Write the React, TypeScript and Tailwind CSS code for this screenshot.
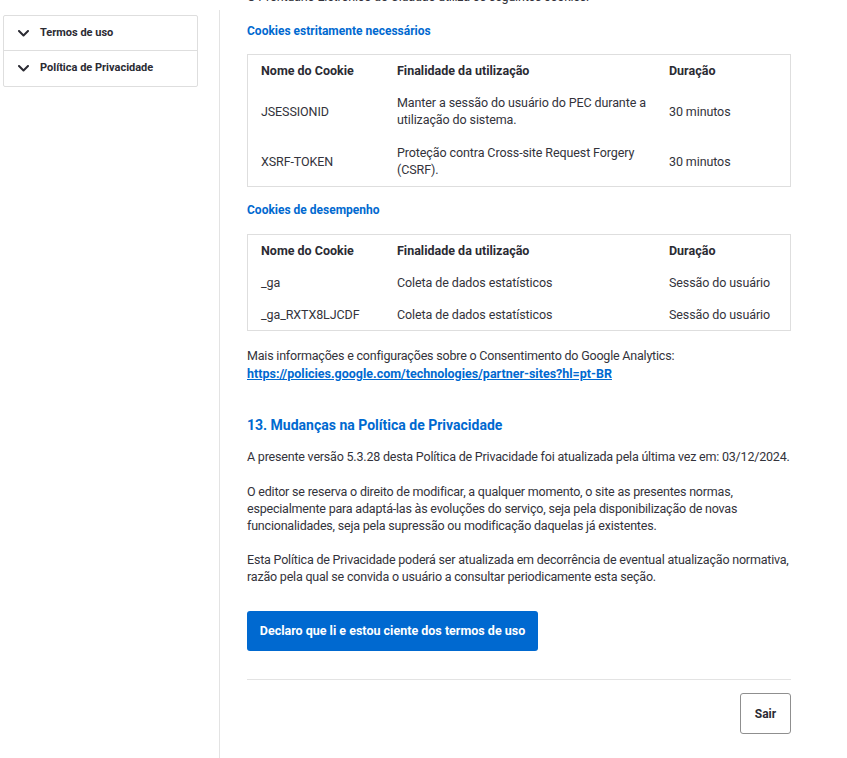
import React from "react";

const font = { fontFamily: "Roboto, 'Noto Sans', sans-serif" };

function Chevron() {
  return (
    <svg width="11" height="7" viewBox="0 0 11 7" className="shrink-0 text-[#2b2b33]">
      <polyline
        points="1,1 5.5,5.5 10,1"
        fill="none"
        stroke="currentColor"
        strokeWidth="2"
        strokeLinecap="round"
        strokeLinejoin="round"
      />
    </svg>
  );
}

function SideItem({ label, last }: { label: string; last?: boolean }) {
  return (
    <div
      className={
        "flex h-[35px] items-center gap-[11px] pl-[14px] " +
        (last ? "" : "border-b border-[#dedede]")
      }
    >
      <Chevron />
      <span className="text-[11px] font-bold text-[#2b2b33]">{label}</span>
    </div>
  );
}

type Row = { name: string; use: string; time: string };

function CookieTable({ rows, tall }: { rows: Row[]; tall?: boolean }) {
  return (
    <div className="border border-[#dedede] px-[13px]">
      <div className="grid h-[31px] grid-cols-[136px_272px_1fr] items-center pt-[1px] text-[12.5px] font-bold text-[#2b2b33]">
        <span>Nome do Cookie</span>
        <span>Finalidade da utilização</span>
        <span>Duração</span>
      </div>
      {rows.map((r) => (
        <div
          key={r.name}
          className={
            "grid grid-cols-[136px_272px_1fr] items-center text-[12.5px] leading-[17px] tracking-[-0.1px] text-[#33333b] " +
            (tall ? "h-[50px]" : "h-[32px]")
          }
        >
          <span>{r.name}</span>
          <span className="pr-[8px]">{r.use}</span>
          <span>{r.time}</span>
        </div>
      ))}
    </div>
  );
}

const body = "text-[12.5px] leading-[17px] tracking-[-0.2px]";

export default function App() {
  return (
    <div className="flex min-h-[758px] bg-white text-[#33333b]" style={font}>
      <aside className="w-[219px] shrink-0 pl-[3px] pr-[21px] pt-[15px]">
        <div className="rounded-[2px] border border-[#dedede]">
          <SideItem label="Termos de uso" />
          <SideItem label="Política de Privacidade" last />
        </div>
      </aside>
      <main className="mt-[10px] w-[600px] border-l border-[#e3e3e3] pl-[27px] pr-[28px]">
        <p className={"-mt-[22px] " + body}>
          O Prontuário Eletrônico do Cidadão utiliza os seguintes cookies:
        </p>
        <h3 className="mt-[18px] text-[12px] font-bold leading-[17px] text-[#0069d0]">
          Cookies estritamente necessários
        </h3>
        <div className="mt-[14px]">
          <CookieTable
            tall
            rows={[
              {
                name: "JSESSIONID",
                use: "Manter a sessão do usuário do PEC durante a utilização do sistema.",
                time: "30 minutos",
              },
              {
                name: "XSRF-TOKEN",
                use: "Proteção contra Cross-site Request Forgery (CSRF).",
                time: "30 minutos",
              },
            ]}
          />
        </div>
        <h3 className="mt-[15px] text-[12px] font-bold leading-[17px] text-[#0069d0]">
          Cookies de desempenho
        </h3>
        <div className="mt-[15px]">
          <CookieTable
            rows={[
              { name: "_ga", use: "Coleta de dados estatísticos", time: "Sessão do usuário" },
              {
                name: "_ga_RXTX8LJCDF",
                use: "Coleta de dados estatísticos",
                time: "Sessão do usuário",
              },
            ]}
          />
        </div>
        <p className="mt-[16px] text-[12.5px] leading-[18px] tracking-[-0.2px]">
          Mais informações e configurações sobre o Consentimento do Google Analytics:
          <br />
          <a href="#" className="font-bold tracking-normal text-[#0069d0] underline">
            https://policies.google.com/technologies/partner-sites?hl=pt-BR
          </a>
        </p>
        <h2 className="mt-[32px] text-[14px] font-bold leading-[20px] text-[#0069d0]">
          13. Mudanças na Política de Privacidade
        </h2>
        <p className={"mt-[13px] " + body}>
          A presente versão 5.3.28 desta Política de Privacidade foi atualizada pela última vez em:
          03/12/2024.
        </p>
        <p className={"mt-[18px] " + body}>
          O editor se reserva o direito de modificar, a qualquer momento, o site as presentes
          normas, especialmente para adaptá-las às evoluções do serviço, seja pela
          disponibilização de novas funcionalidades, seja pela supressão ou modificação daquelas já
          existentes.
        </p>
        <p className={"mt-[17px] " + body}>
          Esta Política de Privacidade poderá ser atualizada em decorrência de eventual atualização
          normativa, razão pela qual se convida o usuário a consultar periodicamente esta seção.
        </p>
        <button className="mt-[26px] h-[40px] w-[291px] rounded-[3px] bg-[#0069d0] text-[12.5px] font-bold text-white">
          Declaro que li e estou ciente dos termos de uso
        </button>
        <div className="mt-[28px] border-t border-[#e3e3e3]" />
        <div className="mt-[13px] flex justify-end">
          <button className="h-[41px] w-[51px] rounded-[3px] border border-[#8f8f8f] text-[12px] font-bold text-[#2b2b33]">
            Sair
          </button>
        </div>
      </main>
    </div>
  );
}
